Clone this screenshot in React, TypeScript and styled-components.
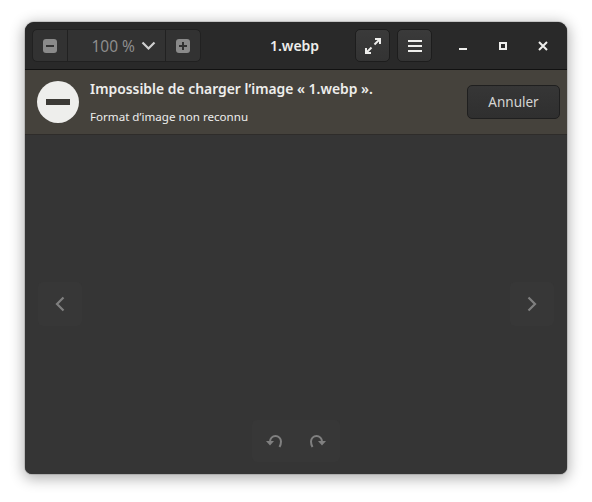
import React from 'react';
import styled, { createGlobalStyle } from 'styled-components';

const GlobalStyle = createGlobalStyle`
  html, body {
    margin: 0;
    padding: 0;
    background: #ffffff;
    font-family: 'Noto Sans', 'Open Sans', sans-serif;
  }
`;

const Page = styled('div')`
  width: 592px;
  height: 502px;
  box-sizing: border-box;
  padding: 22px 25px 28px;
  overflow: hidden;
`;

const Window = styled('div')`
  display: flex;
  flex-direction: column;
  height: 100%;
  border-radius: 9px 9px 7px 7px;
  overflow: hidden;
  background: #353535;
  box-shadow: 0 3px 14px 2px rgba(0, 0, 0, 0.3), 0 0 0 1px rgba(0, 0, 0, 0.12);
`;

const HeaderBar = styled('header')`
  display: flex;
  align-items: center;
  flex: none;
  height: 48px;
  box-sizing: border-box;
  padding: 0 7px;
  background: #292929;
  border-bottom: 1px solid #111111;
`;

const ZoomGroup = styled('div')`
  display: flex;
  height: 33px;
  box-sizing: border-box;
  border: 1px solid #212121;
  border-radius: 5px;
  background: #323232;
`;

const ZoomStep = styled('div')`
  display: flex;
  align-items: center;
  justify-content: center;
  width: 34px;
`;

const ZoomLevel = styled('div')`
  display: flex;
  align-items: center;
  justify-content: flex-end;
  gap: 6px;
  width: 99px;
  box-sizing: border-box;
  padding-right: 9px;
  border-left: 1px solid #212121;
  border-right: 1px solid #212121;
  color: #8d8d8d;
  font-size: 15.5px;
`;

const Title = styled('div')`
  flex: 1;
  padding-left: 33px;
  text-align: center;
  color: #eeeeec;
  font-size: 14px;
  font-weight: 600;
`;

const HeaderButton = styled('div')`
  display: flex;
  align-items: center;
  justify-content: center;
  width: 35px;
  height: 33px;
  box-sizing: border-box;
  margin-right: 7px;
  border: 1px solid #1d1d1d;
  border-radius: 5px;
  background: linear-gradient(#3a3a3a, #333333);
`;

const WindowControls = styled('div')`
  display: flex;
  margin-left: 4px;
  margin-right: -3px;
`;

const WindowControl = styled('div')`
  display: flex;
  align-items: center;
  justify-content: center;
  width: 40px;
  height: 33px;
`;

const InfoBar = styled('div')`
  display: flex;
  align-items: center;
  flex: none;
  height: 65px;
  box-sizing: border-box;
  padding: 0 7px 1px 12px;
  background: #45423c;
  border-bottom: 1px solid #2e2c2a;
`;

const InfoText = styled('div')`
  flex: 1;
  margin-left: 11px;
  padding-top: 4px;
  color: #eeeeec;
`;

const InfoTitle = styled('div')`
  font-size: 13.9px;
  font-weight: 600;
  line-height: 20px;
  margin-top: -4px;
`;

const InfoDetail = styled('div')`
  font-size: 11.6px;
  line-height: 16px;
  margin-top: 10px;
`;

const CancelButton = styled('div')`
  display: flex;
  align-items: center;
  justify-content: center;
  width: 93px;
  height: 34px;
  box-sizing: border-box;
  border: 1px solid #1f1f1f;
  border-radius: 5px;
  background: linear-gradient(#363636, #2f2f2f);
  color: #d6d6d4;
  font-size: 13.5px;
`;

const Viewer = styled('main')`
  position: relative;
  flex: 1;
  background: #353535;
`;

const NavButton = styled('div')<{ $side: 'left' | 'right' }>`
  position: absolute;
  top: 147px;
  ${(p) => p.$side}: 13px;
  display: flex;
  align-items: center;
  justify-content: center;
  width: 44px;
  height: 44px;
  border-radius: 5px;
  background: #373737;
`;

const RotatePill = styled('div')`
  position: absolute;
  bottom: 12px;
  left: 227px;
  display: flex;
  align-items: center;
  width: 88px;
  height: 42px;
  border-radius: 5px;
  background: #373737;
`;

const RotateSlot = styled('div')`
  display: flex;
  align-items: center;
  justify-content: center;
  width: 44px;
`;

const StepIcon = ({ plus }: { plus?: boolean }) => (
  <svg width="14" height="14" viewBox="0 0 14 14">
    <rect width="14" height="14" rx="3" fill="#8a8a8a" />
    <rect x="3" y="6" width="8" height="2" fill="#323232" />
    {plus && <rect x="6" y="3" width="2" height="8" fill="#323232" />}
  </svg>
);

const Chevron = () => (
  <svg width="15" height="10" viewBox="0 0 15 10" fill="none">
    <path d="M1.5 1.5 7.5 7.5 13.5 1.5" stroke="#cfcfcf" strokeWidth="2.2" />
  </svg>
);

const FullscreenIcon = () => (
  <svg width="18" height="18" viewBox="0 0 18 18" fill="none" stroke="#eeeeec" strokeWidth="2">
    <path d="M10.5 7.5 15 3" />
    <path d="M11 2H16V7" />
    <path d="M7.5 10.5 3 15" />
    <path d="M2 11V16H7" />
  </svg>
);

const MenuIcon = () => (
  <svg width="14" height="12" viewBox="0 0 14 12" fill="#eeeeec">
    <rect y="0" width="14" height="2" />
    <rect y="5" width="14" height="2" />
    <rect y="10" width="14" height="2" />
  </svg>
);

const MinimizeIcon = () => (
  <svg width="10" height="10" viewBox="0 0 10 10">
    <rect x="1" y="7" width="8" height="2" fill="#eeeeec" />
  </svg>
);

const MaximizeIcon = () => (
  <svg width="10" height="10" viewBox="0 0 10 10" fill="none">
    <rect x="2" y="2" width="6" height="6" stroke="#eeeeec" strokeWidth="2" />
  </svg>
);

const CloseIcon = () => (
  <svg width="10" height="10" viewBox="0 0 10 10" fill="none">
    <path d="M1 1 9 9M9 1 1 9" stroke="#eeeeec" strokeWidth="2" />
  </svg>
);

const ErrorIcon = () => (
  <svg width="42" height="42" viewBox="0 0 42 42">
    <circle cx="21" cy="21" r="21" fill="#eeeeec" />
    <rect x="9" y="18" width="24" height="6" fill="#3c3a36" />
  </svg>
);

const ArrowIcon = ({ dir }: { dir: 'left' | 'right' }) => (
  <svg width="10" height="16" viewBox="0 0 10 16" fill="none">
    <path
      d={dir === 'left' ? 'M8.5 1.5 2 8 8.5 14.5' : 'M1.5 1.5 8 8 1.5 14.5'}
      stroke="#7f7f7f"
      strokeWidth="2.2"
    />
  </svg>
);

const RotateIcon = ({ flip }: { flip?: boolean }) => (
  <svg
    width="16"
    height="13"
    viewBox="0 0 16 13"
    fill="none"
    style={flip ? { transform: 'scaleX(-1)' } : undefined}
  >
    <path d="M4 6.5A5.5 5.5 0 0 1 15 6.5c0 2.2-.6 4-1.5 5.5" stroke="#808080" strokeWidth="2" />
    <path d="M0 6H8L4 10.5Z" fill="#808080" />
  </svg>
);

const App: React.FC = () => (
  <Page>
    <GlobalStyle />
    <Window>
      <HeaderBar>
        <ZoomGroup>
          <ZoomStep>
            <StepIcon />
          </ZoomStep>
          <ZoomLevel>
            100 %
            <Chevron />
          </ZoomLevel>
          <ZoomStep>
            <StepIcon plus />
          </ZoomStep>
        </ZoomGroup>
        <Title>1.webp</Title>
        <HeaderButton>
          <FullscreenIcon />
        </HeaderButton>
        <HeaderButton>
          <MenuIcon />
        </HeaderButton>
        <WindowControls>
          <WindowControl>
            <MinimizeIcon />
          </WindowControl>
          <WindowControl>
            <MaximizeIcon />
          </WindowControl>
          <WindowControl>
            <CloseIcon />
          </WindowControl>
        </WindowControls>
      </HeaderBar>
      <InfoBar>
        <ErrorIcon />
        <InfoText>
          <InfoTitle>Impossible de charger l’image « 1.webp ».</InfoTitle>
          <InfoDetail>Format d’image non reconnu</InfoDetail>
        </InfoText>
        <CancelButton>Annuler</CancelButton>
      </InfoBar>
      <Viewer>
        <NavButton $side="left">
          <ArrowIcon dir="left" />
        </NavButton>
        <NavButton $side="right">
          <ArrowIcon dir="right" />
        </NavButton>
        <RotatePill>
          <RotateSlot>
            <RotateIcon />
          </RotateSlot>
          <RotateSlot>
            <RotateIcon flip />
          </RotateSlot>
        </RotatePill>
      </Viewer>
    </Window>
  </Page>
);

export default App;
